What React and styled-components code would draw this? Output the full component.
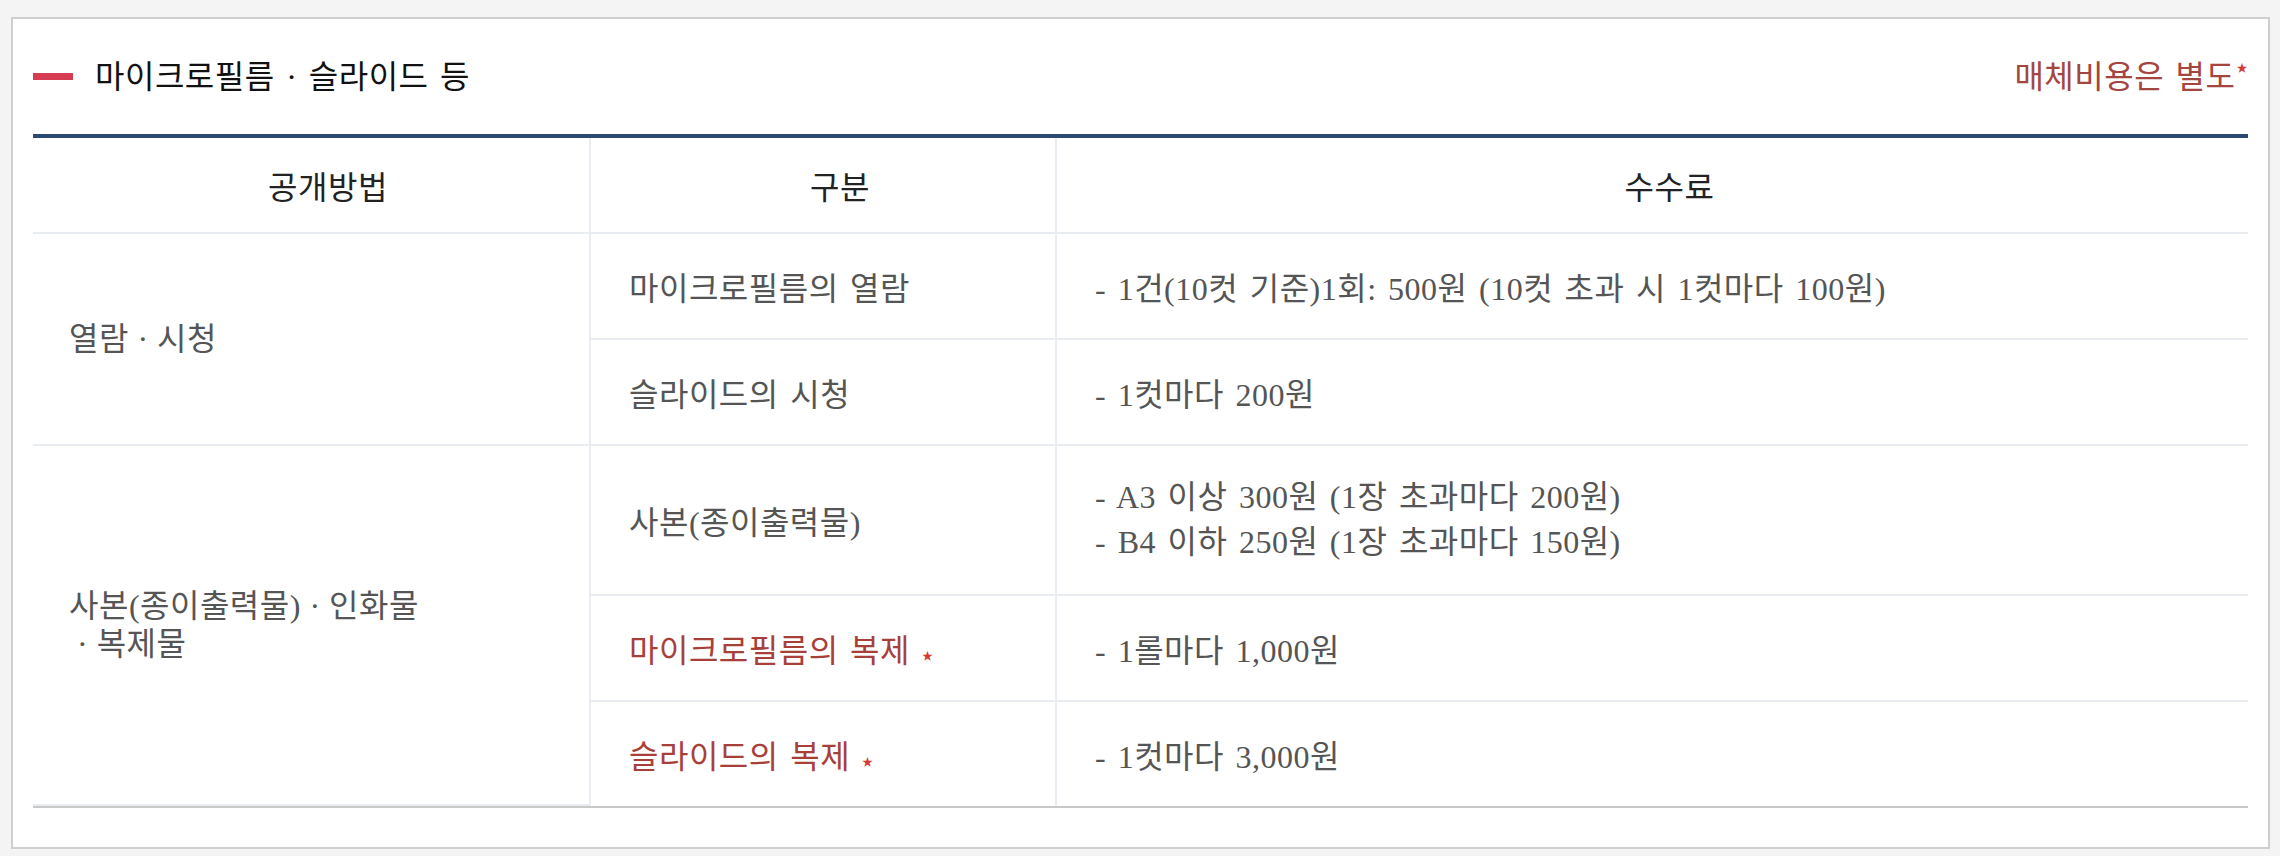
import styled, { createGlobalStyle } from "styled-components";

const GlobalStyle = createGlobalStyle`
  * {
    box-sizing: border-box;
  }

  body {
    margin: 0;
    background: #f4f4f4;
    font-family: "Liberation Serif", "Noto Sans CJK KR", serif;
    letter-spacing: 0.5px;
    word-spacing: 3px;
  }
`;

const rows = [
  {
    method: ["열람 · 시청"],
    span: 2,
    kind: "마이크로필름의 열람",
    fees: ["- 1건(10컷 기준)1회: 500원 (10컷 초과 시 1컷마다 100원)"],
    height: 106,
  },
  {
    kind: "슬라이드의 시청",
    fees: ["- 1컷마다 200원"],
    height: 106,
  },
  {
    method: ["사본(종이출력물) · 인화물", "· 복제물"],
    span: 3,
    kind: "사본(종이출력물)",
    fees: [
      "- A3 이상 300원 (1장 초과마다 200원)",
      "- B4 이하 250원 (1장 초과마다 150원)",
    ],
    height: 150,
  },
  {
    kind: "마이크로필름의 복제",
    media: true,
    fees: ["- 1롤마다 1,000원"],
    height: 106,
  },
  {
    kind: "슬라이드의 복제",
    media: true,
    fees: ["- 1컷마다 3,000원"],
    height: 104,
    last: true,
  },
];

export default function App() {
  return (
    <>
      <GlobalStyle />
      <Page>
        <Panel>
          <TitleBar>
            <Title>
              <TitleMark />
              마이크로필름 · 슬라이드 등
            </Title>
            <Note>
              매체비용은 별도<Star $sup>★</Star>
            </Note>
          </TitleBar>

          <FeeTable>
            <thead>
              <tr>
                <HeadCell $w="556px">공개방법</HeadCell>
                <HeadCell $w="466px" $divider>
                  구분
                </HeadCell>
                <HeadCell $divider>수수료</HeadCell>
              </tr>
            </thead>
            <tbody>
              {rows.map((row) => (
                <tr key={row.kind} style={{ height: row.height }}>
                  {row.method && (
                    <MethodCell rowSpan={row.span}>
                      {row.method.map((line, i) => (
                        <MethodLine key={line} $indent={i > 0}>
                          {line}
                        </MethodLine>
                      ))}
                    </MethodCell>
                  )}
                  <Cell $divider $last={row.last} $red={row.media}>
                    {row.kind}
                    {row.media && <Star $gap>★</Star>}
                  </Cell>
                  <Cell $divider $last={row.last}>
                    {row.fees.map((fee) => (
                      <FeeLine key={fee} $tall={row.fees.length > 1}>
                        {fee}
                      </FeeLine>
                    ))}
                  </Cell>
                </tr>
              ))}
            </tbody>
          </FeeTable>
        </Panel>
      </Page>
    </>
  );
}

const Page = styled.div`
  padding: 17px 10px 7px 11px;
`;

const Panel = styled.section`
  background: #fff;
  border: 2px solid #cfcfcf;
  padding: 0 20px 39px;
`;

const TitleBar = styled.header`
  display: flex;
  align-items: center;
  justify-content: space-between;
  height: 110px;
  margin-bottom: 5px;
`;

const Title = styled.h2`
  display: flex;
  align-items: center;
  gap: 22px;
  margin: 0;
  font-size: 32px;
  font-weight: 400;
  color: #111;
`;

const TitleMark = styled.span`
  display: block;
  width: 40px;
  height: 7px;
  margin-top: 5px;
  background: #d63d52;
`;

const Note = styled.p`
  margin: 0;
  font-size: 32px;
  color: #a5453f;
`;

const Star = styled.span`
  margin-left: ${(p) => (p.$gap ? "12px" : "1px")};
  font-size: 11px;
  color: #d23a32;
  vertical-align: ${(p) => (p.$sup ? "16px" : "middle")};
`;

const FeeTable = styled.table`
  width: 100%;
  table-layout: fixed;
  border-collapse: separate;
  border-spacing: 0;
  border-top: 4px solid #2b4b74;
  border-bottom: 2px solid #c8c8c8;
  font-size: 32px;
  color: #555;
`;

const HeadCell = styled.th`
  width: ${(p) => p.$w || "auto"};
  height: 96px;
  padding: 0 0 0 34px;
  font-weight: 400;
  text-align: center;
  color: #222;
  border-bottom: 2px solid #e9edf2;
  border-left: ${(p) => (p.$divider ? "2px solid #e9edf2" : "none")};
`;

const Cell = styled.td`
  padding: 0 38px;
  vertical-align: middle;
  white-space: nowrap;
  color: ${(p) => (p.$red ? "#a8403a" : "#555")};
  border-left: ${(p) => (p.$divider ? "2px solid #e9edf2" : "none")};
  border-bottom: ${(p) => (p.$last ? "none" : "2px solid #e9edf2")};
`;

const MethodCell = styled(Cell)`
  padding: 0 36px;
  line-height: 38px;
`;

const MethodLine = styled.div`
  padding-left: ${(p) => (p.$indent ? "8px" : "0")};
  word-spacing: 0;
`;

const FeeLine = styled.div`
  line-height: ${(p) => (p.$tall ? "45px" : "normal")};
`;
